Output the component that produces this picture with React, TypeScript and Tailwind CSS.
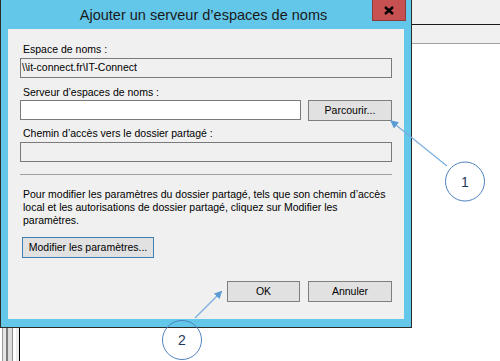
const font = { fontFamily: '"Liberation Sans", Arial, sans-serif' };

function Button({ label, className }: { label: string; className: string }) {
  return (
    <div
      className={`h-[21px] flex items-center justify-center bg-[#e1e1e1] border text-[10.5px] leading-[13px] text-black ${className}`}
    >
      {label}
    </div>
  );
}

function TextBox({ value, readOnly, className }: { value?: string; readOnly?: boolean; className: string }) {
  return (
    <div
      className={`h-[20px] flex items-center pl-[1px] border border-[#7a7a7a] text-[10.5px] text-black whitespace-nowrap ${
        readOnly ? 'bg-[#f0f0f0]' : 'bg-white'
      } ${className}`}
    >
      {value}
    </div>
  );
}

function Label({ text, className }: { text: string; className: string }) {
  return <div className={`h-[13px] leading-[13px] ml-[3px] text-[10.5px] text-black whitespace-nowrap ${className}`}>{text}</div>;
}

function Annotations() {
  return (
    <svg className="absolute left-0 top-0 pointer-events-none" width="500" height="361" viewBox="0 0 500 361">
      <defs>
        <marker id="tip" markerWidth="8" markerHeight="8" refX="7" refY="4" orient="auto" markerUnits="userSpaceOnUse">
          <path d="M0,0 L8,4 L0,8 z" fill="#5b9bd5" />
        </marker>
      </defs>
      <line x1="447" y1="166" x2="391" y2="121" stroke="#7aaedf" strokeWidth="1.2" markerEnd="url(#tip)" />
      <circle cx="465" cy="181.5" r="19.5" fill="none" stroke="#4f81bd" strokeWidth="1" />
      <text x="465" y="186.5" textAnchor="middle" fontSize="14" fill="#1f3a60" style={font}>
        1
      </text>
      <line x1="195" y1="318" x2="221.5" y2="291.5" stroke="#7aaedf" strokeWidth="1.2" markerEnd="url(#tip)" />
      <circle cx="182" cy="340" r="19.5" fill="none" stroke="#4f81bd" strokeWidth="1" />
      <text x="182" y="345" textAnchor="middle" fontSize="14" fill="#1f3a60" style={font}>
        2
      </text>
    </svg>
  );
}

export default function App() {
  return (
    <div className="relative w-[500px] h-[361px] bg-white overflow-hidden" style={font}>
      {/* fenêtre en arrière-plan */}
      <div className="flex flex-col h-full">
        <div className="h-[25px] bg-[#f0f0f0] border-b border-[#1b1b1b]" />
        <div className="h-[19px] bg-[#f0f0f0] border-b border-[#a0a0a0]" />
        <div className="flex-1 flex">
          <div className="w-[2px]" />
          <div className="w-px bg-[#9a9a9a]" />
          <div className="w-[3px] bg-[#e6e6e6]" />
          <div className="w-[2px] bg-[#7c7c7c]" />
          <div className="w-[4px] bg-[#dcdcdc]" />
          <div className="w-px bg-[#8c8c8c]" />
          <div className="w-[3px] bg-white" />
          <div className="w-[3px] bg-[#ececec]" />
          <div className="w-px bg-black" />
          <div className="flex-1 bg-white" />
        </div>
      </div>

      {/* boîte de dialogue */}
      <div className="absolute left-0 top-0 w-[412px] h-[328px] flex flex-col bg-[#63c7ea] border-l border-r border-b border-[#2b2b2b]">
        <div className="h-[29px] flex items-start shrink-0">
          <div className="flex-1" />
          <div className="pt-[6px] text-[14.5px] leading-[18px] text-[#1a1a1a] whitespace-nowrap">
            Ajouter un serveur d’espaces de noms
          </div>
          <div className="flex-1 flex justify-end pr-[5px]">
            <div className="w-[34px] h-[21px] bg-[#c75050] border border-t-0 border-[#8e3b3b] flex items-center justify-center">
              <svg width="10" height="9" viewBox="0 0 10 9">
                <path d="M1,1 L9,8 M9,1 L1,8" stroke="#000" strokeWidth="2.4" />
              </svg>
            </div>
          </div>
        </div>

        <div className="ml-[7px] w-[396px] h-[290px] bg-[#f0f0f0] px-[12px] flex flex-col">
          <Label text="Espace de noms :" className="mt-[14px]" />
          <TextBox value="\\it-connect.fr\IT-Connect" readOnly className="mt-[2px]" />
          <Label text="Serveur d’espaces de noms :" className="mt-[8px]" />
          <div className="mt-px h-[21px] flex gap-[7px]">
            <TextBox className="w-[281px]" />
            <Button label="Parcourir..." className="w-[84px] border-[#7f7f7f]" />
          </div>
          <Label text="Chemin d’accès vers le dossier partagé :" className="mt-[6px]" />
          <TextBox readOnly className="mt-[2px]" />
          <div className="mt-[12px] h-px bg-[#a0a0a0]" />
          <div className="mt-[13px] ml-[3px] text-[10.5px] leading-[13px] text-black whitespace-nowrap">
            Pour modifier les paramètres du dossier partagé, tels que son chemin d’accès
            <br />
            local et les autorisations de dossier partagé, cliquez sur Modifier les
            <br />
            paramètres.
          </div>
          <Button label="Modifier les paramètres..." className="mt-[10px] ml-[2px] w-[132px] border-[#3c7fb1]" />
          <div className="mt-[23px] flex justify-end gap-[8px]">
            <Button label="OK" className="w-[73px] border-[#7f7f7f]" />
            <Button label="Annuler" className="w-[84px] border-[#7f7f7f]" />
          </div>
        </div>
      </div>

      <Annotations />
    </div>
  );
}
